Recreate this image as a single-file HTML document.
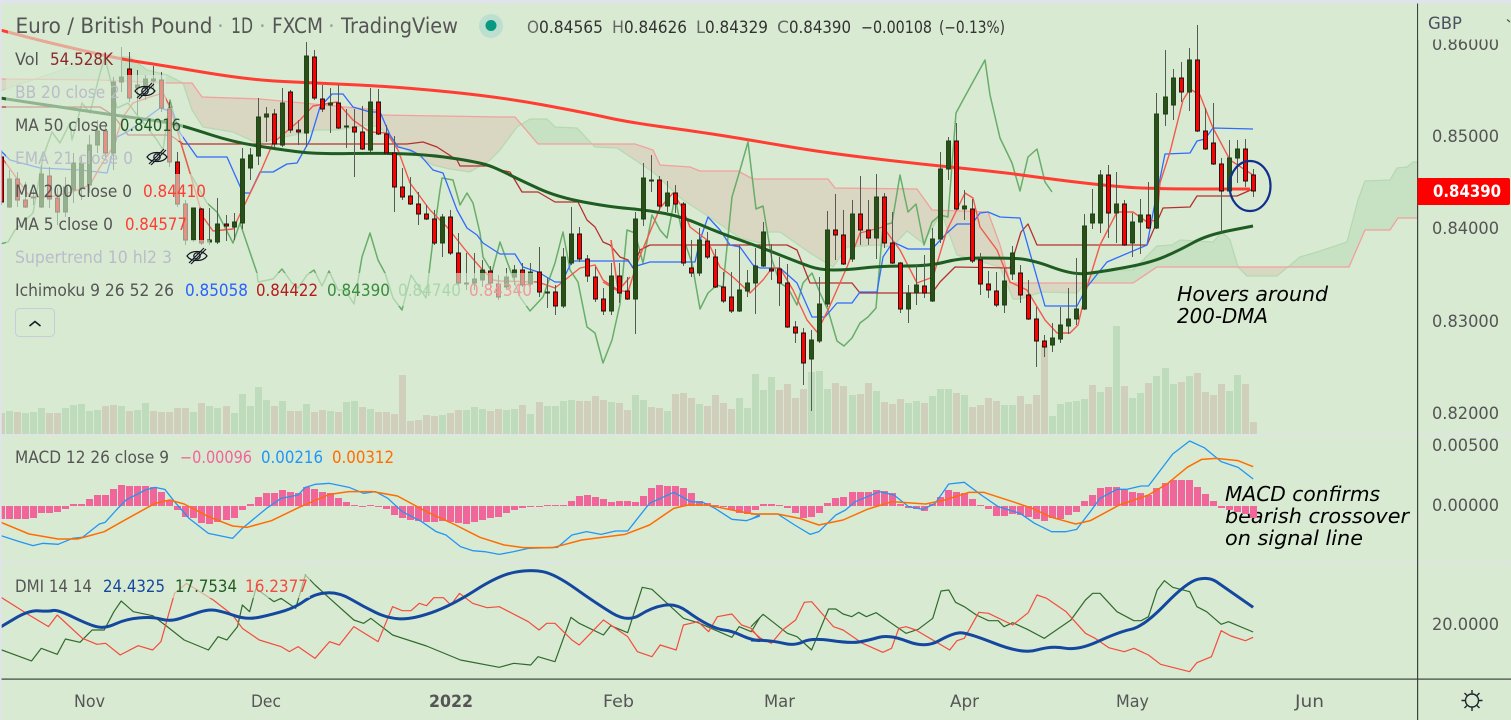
<!DOCTYPE html>
<html lang="en"><head><meta charset="utf-8"><title>EUR/GBP chart</title>
<style>
html,body{margin:0;padding:0;background:#d9ead3;width:1511px;height:720px;overflow:hidden}
svg{display:block}
text{font-family:"DejaVu Sans",sans-serif;font-size:16.5px;fill:#555}
.v{vector-effect:non-scaling-stroke;fill:none;stroke-linejoin:round}
.a{font-family:"DejaVu Sans",sans-serif;font-style:oblique;font-size:20px;fill:#000}
.t{font-size:21.5px}
</style></head><body>
<svg width="1511" height="720" viewBox="0 0 1511 720" xmlns="http://www.w3.org/2000/svg">
<defs>
<clipPath id="abv"><polygon points="0,79 100,80 167,83 192,83 202,97 260,99 377,110 380,115 500,117 515,117 538,144 635,144 653,150 660,165 690,167 700,171 738,171 753,179 828,179 835,188 917,189 932,210 988,212 1000,245 1010,283 1133,283 1157,267 1349,267 1365,230 1390,230 1398,218 1417,218 1417,0 0,0"/></clipPath>
<polygon id="cl" points="0,91 50,74 100,57 130,57 147,70 167,75 183,83 192,110 203,127 233,132 257,143 317,130 337,130 367,125 380,127 393,143 413,153 433,165 450,169 470,172 490,160 500,150 517,127 530,119 547,119 555,127 577,128 595,147 617,148 653,172 683,200 717,222 740,238 760,243 767,232 780,232 810,253 833,267 847,247 877,245 892,247 907,231 923,243 937,220 943,217 957,255 1000,267 1013,299 1020,299 1042,292 1077,293 1090,277 1100,270 1133,270 1157,246 1172,245 1180,240 1213,242 1222,232 1230,240 1238,267 1247,276 1277,276 1300,257 1317,252 1347,242 1358,200 1365,181 1390,180 1397,168 1407,167 1413,162 1417,162 1417,218 1398,218 1390,230 1365,230 1349,267 1157,267 1133,283 1010,283 1000,245 988,212 932,210 917,189 835,188 828,179 753,179 738,171 700,171 690,167 660,165 653,150 635,144 538,144 515,117 500,117 380,115 377,110 260,99 202,97 192,83 167,83 100,80 0,79"/>
</defs>
<rect width="1511" height="720" fill="#d9ead3"/>

<!-- cloud -->
<use href="#cl" fill="#d9d7c1"/>
<use href="#cl" fill="#c7e1c3" clip-path="url(#abv)"/>
<polyline fill="none" stroke="#b6d9b1" stroke-width="1.3" points="0,91 50,74 100,57 130,57 147,70 167,75 183,83 192,110 203,127 233,132 257,143 317,130 337,130 367,125 380,127 393,143 413,153 433,165 450,169 470,172 490,160 500,150 517,127 530,119 547,119 555,127 577,128 595,147 617,148 653,172 683,200 717,222 740,238 760,243 767,232 780,232 810,253 833,267 847,247 877,245 892,247 907,231 923,243 937,220 943,217 957,255 1000,267 1013,299 1020,299 1042,292 1077,293 1090,277 1100,270 1133,270 1157,246 1172,245 1180,240 1213,242 1222,232 1230,240 1238,267 1247,276 1277,276 1300,257 1317,252 1347,242 1358,200 1365,181 1390,180 1397,168 1407,167 1413,162 1417,162"/>
<polyline fill="none" stroke="#f2a09c" stroke-width="1.3" points="0,79 100,80 167,83 192,83 202,97 260,99 377,110 380,115 500,117 515,117 538,144 635,144 653,150 660,165 690,167 700,171 738,171 753,179 828,179 835,188 917,189 932,210 988,212 1000,245 1010,283 1133,283 1157,267 1349,267 1365,230 1390,230 1398,218 1417,218"/>

<!-- volume -->
<path fill="none" stroke="#cfcfbb" stroke-width="7" d="M1.5 413V434M17.5 412V434M49.5 413V434M57.5 413V434M105.5 406V434M113.5 405V434M129.5 411V434M153.5 411V434M161.5 412V434M169.5 412V434M177.5 408V434M185.5 408V434M201.5 403V434M226.5 406V434M274.5 406V434M290.5 411V434M298.5 411V434M314.5 412V434M322.5 410V434M338.5 412V434M362.5 407V434M378.5 412V434M386.5 412V434M394.5 414V434M402.5 375V434M410.5 421V434M418.5 420V434M426.5 415V434M434.5 416V434M450.5 413V434M458.5 410V434M490.5 411V434M498.5 409V434M522.5 405V434M539.5 402V434M579.5 401V434M587.5 401V434M595.5 396V434M603.5 400V434M619.5 403V434M627.5 410V434M651.5 407V434M659.5 408V434M675.5 394V434M683.5 393V434M691.5 398V434M707.5 406V434M715.5 395V434M723.5 403V434M731.5 409V434M779.5 390V434M787.5 384V434M795.5 398V434M803.5 389V434M835.5 383V434M843.5 386V434M860.5 394V434M868.5 383V434M884.5 402V434M892.5 404V434M900.5 399V434M924.5 403V434M956.5 393V434M972.5 407V434M980.5 405V434M988.5 398V434M996.5 401V434M1020.5 396V434M1028.5 404V434M1036.5 395V434M1044.5 345V434M1092.5 385V434M1108.5 387V434M1124.5 386V434M1148.5 383V434M1181.5 382V434M1197.5 373V434M1205.5 392V434M1213.5 395V434M1221.5 384V434M1245.5 384V434M1253.5 422V434"/>
<path fill="none" stroke="#bedcbb" stroke-width="7" d="M9.5 411V434M25.5 413V434M33.5 412V434M41.5 408V434M65.5 408V434M73.5 405V434M81.5 404V434M89.5 411V434M97.5 410V434M121.5 406V434M137.5 410V434M145.5 403V434M193.5 412V434M209.5 406V434M217.5 408V434M234.5 413V434M242.5 394V434M250.5 406V434M258.5 387V434M266.5 400V434M282.5 401V434M306.5 404V434M330.5 411V434M346.5 402V434M354.5 401V434M370.5 409V434M442.5 415V434M466.5 410V434M474.5 407V434M482.5 409V434M506.5 410V434M514.5 409V434M530.5 414V434M547.5 406V434M555.5 406V434M563.5 401V434M571.5 400V434M611.5 402V434M635.5 395V434M643.5 400V434M667.5 411V434M699.5 404V434M739.5 398V434M747.5 408V434M755.5 374V434M763.5 390V434M771.5 377V434M811.5 372V434M819.5 371V434M827.5 389V434M852.5 395V434M876.5 391V434M908.5 403V434M916.5 401V434M932.5 396V434M940.5 389V434M948.5 389V434M964.5 395V434M1004.5 405V434M1012.5 405V434M1052.5 416V434M1060.5 404V434M1068.5 402V434M1076.5 401V434M1084.5 399V434M1100.5 392V434M1116.5 326V434M1132.5 398V434M1140.5 393V434M1156.5 376V434M1165.5 368V434M1173.5 384V434M1189.5 376V434M1229.5 391V434M1237.5 375V434"/>

<!-- chikou -->
<polyline fill="none" stroke="#68ad69" stroke-width="1.5" stroke-linejoin="round" points="0,244 8,242 15,230 33,213 43,157 52,132 60,143 70,123 72,140 82,103 90,113 100,73 105,57 117,108 128,103 137,115 157,140 163,150 170,100 180,140 190,173 207,203 217,212 233,243 240,223 257,273 258,282 273,279 282,269 292,283 298,288 307,275 314,270 322,286 329,271 338,290 345,290 354,304 362,257 370,233 378,260 385,273 393,298 402,310 411,275 426,298 433,240 440,190 442,178 453,180 460,205 467,193 473,203 480,233 483,257 492,272 500,242 520,297 530,311 543,297 555,263 563,232 570,270 578,282 587,327 595,333 603,363 612,340 620,304 627,230 635,233 643,263 652,215 660,230 667,238 675,197 683,237 692,263 700,309 708,293 717,285 723,287 732,197 740,170 748,142 756,209 763,206 772,260 780,283 788,288 797,305 803,283 812,273 820,293 828,310 837,341 844,346 852,338 860,323 868,317 876,308 883,225 892,223 900,175 908,212 916,204 924,245 932,222 940,215 948,217 956,113 963,100 985,60 990,95 1000,138 1012,163 1020,191 1028,157 1037,149 1045,182 1052,192"/>
<!-- kijun -->
<polyline fill="none" stroke="#b5302e" stroke-width="1.3" stroke-linejoin="round" points="0,107 100,107 113,115 128,135 170,135 183,144 407,144 423,142 437,147 457,160 460,166 487,166 500,170 510,172 522,192 538,192 555,202 578,202 587,220 595,227 603,242 610,245 620,257 628,260 633,268 640,250 650,245 787,245 797,250 810,283 852,283 860,293 932,293 940,282 955,267 1010,268 1021,232 1028,224 1037,245 1147,245 1163,208 1190,207 1197,196 1237,196 1253,189"/>
<!-- tenkan -->
<polyline fill="none" stroke="#2f6bff" stroke-width="1.3" stroke-linejoin="round" points="0,150 10,160 40,168 80,170 107,173 117,137 127,132 137,125 160,108 173,112 180,133 197,157 227,157 243,193 250,193 260,172 273,172 287,164 297,163 310,140 320,107 332,94 343,94 353,107 370,112 380,112 390,135 398,147 410,150 420,155 433,170 443,173 457,210 467,228 477,235 483,243 500,254 515,254 523,267 538,272 555,282 562,282 572,261 628,261 633,267 650,262 680,262 695,262 700,240 708,217 720,230 730,245 740,247 753,265 760,268 780,268 797,283 812,317 825,317 837,303 852,303 860,292 877,292 883,257 893,242 908,249 932,249 947,233 957,224 972,224 980,213 988,212 1000,217 1020,218 1045,306 1077,306 1087,287 1107,262 1147,245 1153,213 1165,154 1190,153 1197,141 1205,139 1213,128 1253,129"/>
<!-- MA5 -->
<polyline fill="none" stroke="#f4584b" stroke-width="1.4" stroke-linejoin="round" points="0,155 13,173 30,197 50,197 72,192 90,185 100,167 113,147 123,117 133,103 150,97 163,93 170,107 180,140 190,173 200,207 203,217 213,231 223,230 233,229 242,210 260,173 273,143 300,120 313,106 337,102 353,120 370,132 387,133 398,150 410,183 430,210 447,227 467,252 480,267 493,280 500,281 538,282 555,288 565,280 580,268 595,265 603,280 618,290 628,292 637,263 660,208 673,193 682,207 690,227 707,240 720,267 733,277 750,293 763,280 772,268 780,268 793,290 807,320 817,332 828,310 847,267 860,233 883,227 900,250 917,283 933,277 947,230 965,193 973,198 980,227 997,250 1010,282 1027,290 1045,320 1057,333 1070,333 1078,325 1087,287 1100,245 1117,212 1133,212 1147,222 1157,220 1160,183 1170,152 1183,100 1190,89 1200,95 1213,128 1230,160 1253,175"/>
<path fill="none" stroke="#f4584b" stroke-width="1.6" d="M611 240L618 290M603 282L618 291L630 277"/>
<!-- MA 200 -->
<path fill="none" stroke="#ff3d33" stroke-width="3" stroke-linejoin="round" d="M0 30L25 36.5Q50,43 85,51Q120,59 140,62Q160,65 205,72.5Q250,80 283.5,81.5Q317,83 358.5,85Q400,87 450,92Q500,97 543.5,105Q587,113 607,117.5Q627,122 663.5,127Q700,132 725,136Q750,140 785,146Q820,152 865,157.5Q910,163 955,167.5Q1000,172 1021.5,175Q1043,178 1071.5,181.5Q1100,185 1125,187Q1150,189 1200,189L1250 189"/>
<!-- MA 50 -->
<path fill="none" stroke="#1e5c22" stroke-width="3" stroke-linejoin="round" d="M0 98L33 103Q67,108 90,111.5Q113,115 140,118.5Q167,122 178.5,125Q190,128 211.5,135Q233,142 258,146Q283,150 300,152Q317,154 350,153.5Q383,153 408,154Q433,155 458,159Q483,163 491.5,166.5Q500,170 510,175Q520,180 538.5,188.5Q557,197 583.5,202Q610,207 628.5,208.5Q647,210 665,213.5Q683,217 700,224.5Q717,232 738.5,239.5Q760,247 780,255Q800,263 810,266.5Q820,270 833.5,270Q847,270 863.5,268Q880,266 905,266Q930,266 945,262Q960,258 980,258Q1000,258 1015,258.5Q1030,259 1051.5,267Q1073,275 1086.5,273.5Q1100,272 1125,267.5Q1150,263 1165,256.5Q1180,250 1193.5,242.5Q1207,235 1230,230.5L1253 226"/>

<!-- candles -->
<path fill="none" stroke="#555a55" stroke-width="1" d="M1.5 150V205M9.5 170V208M17.5 172V207M25.5 182V208M33.5 190V205M41.5 165V208M49.5 167V208M57.5 188V225M65.5 177V217M73.5 153V203M81.5 157V200M89.5 135V193M97.5 120V153M105.5 126V157M113.5 77V170M121.5 47V92M129.5 52V102M137.5 70V115M145.5 75V100M153.5 66V93M161.5 72V112M169.5 102V167M177.5 152V207M185.5 200V245M193.5 208V242M201.5 208V245M209.5 208V245M217.5 198V244M226.5 215V241M234.5 213V240M242.5 148V229M250.5 148V180M258.5 98V165M266.5 107V142M274.5 109V147M282.5 88V147M290.5 90V133M298.5 120V145M306.5 42V147M314.5 50V100M322.5 85V112M330.5 88V133M338.5 85V129M346.5 109V148M354.5 109V177M362.5 106V150M370.5 88V152M378.5 89V135M386.5 125V155M394.5 136V212M402.5 168V200M410.5 177V205M418.5 192V225M426.5 205V220M434.5 210V245M442.5 214V257M450.5 210V255M458.5 233V285M466.5 253V290M474.5 253V290M482.5 260V287M490.5 266V290M498.5 275V300M506.5 268V289M514.5 265V285M522.5 263V287M530.5 263V286M539.5 247V297M547.5 278V308M555.5 285V315M563.5 248V308M571.5 207V265M579.5 227V262M587.5 255V282M595.5 267V302M603.5 288V315M611.5 263V315M619.5 263V303M627.5 277V300M635.5 212V334M643.5 163V226M651.5 155V192M659.5 176V213M667.5 181V212M675.5 185V213M683.5 202V266M691.5 240V277M699.5 228V276M707.5 232V259M715.5 249V288M723.5 272V303M731.5 272V313M739.5 245V312M747.5 270V297M755.5 248V314M763.5 222V267M771.5 244V280M779.5 257V306M787.5 264V328M795.5 321V343M803.5 328V385M811.5 330V411M819.5 277V343M827.5 211V307M835.5 194V260M843.5 210V265M852.5 200V262M860.5 176V245M868.5 200V245M876.5 174V259M884.5 193V248M892.5 212V264M900.5 262V313M908.5 285V323M916.5 265V305M924.5 255V298M932.5 228V302M940.5 152V243M948.5 137V180M956.5 123V210M964.5 190V220M972.5 199V263M980.5 253V295M988.5 271V298M996.5 272V307M1004.5 268V313M1012.5 246V280M1020.5 265V303M1028.5 280V320M1036.5 307V367M1044.5 335V357M1052.5 323V352M1060.5 307V343M1068.5 288V334M1076.5 258V325M1084.5 214V310M1092.5 189V229M1100.5 170V233M1108.5 165V238M1116.5 172V243M1124.5 200V246M1132.5 213V257M1140.5 199V254M1148.5 182V229M1156.5 93V229M1165.5 50V126M1173.5 69V120M1181.5 62V102M1189.5 48V111M1197.5 25V132M1205.5 108V150M1213.5 103V165M1221.5 158V233M1229.5 140V192M1237.5 140V183M1245.5 139V187M1253.5 169V197"/>
<path fill="#ff0000" stroke="#111" stroke-width=".9" d="M-.5 157h4V202h-4zM15.5 179h4V200h-4zM23.5 200h4V207h-4zM47.5 176h4V199h-4zM55.5 198h4V212h-4zM103.5 131h4V153h-4zM127.5 69h4V98h-4zM159.5 80h4V108h-4zM167.5 109h4V162h-4zM175.5 162h4V204h-4zM183.5 204h4V240h-4zM199.5 209h4V243h-4zM224.5 224h4V226h-4zM272.5 114h4V144h-4zM288.5 92h4V130h-4zM296.5 130h4V132h-4zM312.5 57h4V98h-4zM320.5 99h4V109h-4zM336.5 103h4V128h-4zM352.5 127h4V132h-4zM360.5 132h4V149h-4zM376.5 102h4V134h-4zM384.5 134h4V153h-4zM392.5 153h4V187h-4zM400.5 187h4V197h-4zM408.5 196h4V204h-4zM416.5 204h4V214h-4zM424.5 214h4V219h-4zM432.5 219h4V243h-4zM448.5 217h4V253h-4zM456.5 253h4V283h-4zM488.5 271h4V283h-4zM496.5 284h4V297h-4zM520.5 270h4V285h-4zM537.5 272h4V292h-4zM553.5 292h4V306h-4zM577.5 234h4V259h-4zM585.5 259h4V276h-4zM593.5 277h4V299h-4zM601.5 299h4V311h-4zM617.5 276h4V293h-4zM625.5 291h4V299h-4zM657.5 180h4V206h-4zM673.5 193h4V204h-4zM681.5 204h4V263h-4zM689.5 268h4V273h-4zM705.5 241h4V257h-4zM713.5 257h4V287h-4zM721.5 287h4V301h-4zM729.5 297h4V311h-4zM769.5 269h4V271h-4zM777.5 269h4V283h-4zM785.5 283h4V327h-4zM793.5 327h4V333h-4zM801.5 333h4V363h-4zM833.5 230h4V235h-4zM841.5 235h4V264h-4zM858.5 214h4V230h-4zM866.5 230h4V238h-4zM882.5 197h4V243h-4zM890.5 243h4V263h-4zM898.5 263h4V309h-4zM922.5 286h4V293h-4zM954.5 141h4V209h-4zM970.5 209h4V261h-4zM978.5 260h4V284h-4zM986.5 284h4V290h-4zM994.5 291h4V305h-4zM1018.5 273h4V295h-4zM1026.5 295h4V319h-4zM1034.5 319h4V341h-4zM1042.5 341h4V347h-4zM1106.5 175h4V213h-4zM1122.5 204h4V245h-4zM1146.5 215h4V228h-4zM1179.5 78h4V92h-4zM1195.5 60h4V131h-4zM1203.5 131h4V149h-4zM1211.5 143h4V164h-4zM1219.5 164h4V191h-4zM1243.5 149h4V181h-4zM1251.5 175h4V191h-4z"/>
<path fill="#28511a" stroke="#1c3d11" stroke-width=".9" d="M7.5 179h4V207h-4zM31.5 197h4V198h-4zM39.5 174h4V207h-4zM63.5 187h4V212h-4zM71.5 163h4V190h-4zM79.5 163h4V188h-4zM87.5 145h4V185h-4zM95.5 131h4V145h-4zM111.5 82h4V153h-4zM119.5 77h4V82h-4zM135.5 85h4V88h-4zM143.5 79h4V87h-4zM151.5 79h4V81h-4zM191.5 208h4V240h-4zM207.5 240h4V242h-4zM215.5 224h4V242h-4zM232.5 222h4V227h-4zM240.5 159h4V223h-4zM248.5 155h4V168h-4zM256.5 117h4V156h-4zM264.5 114h4V117h-4zM280.5 103h4V145h-4zM304.5 56h4V133h-4zM328.5 103h4V105h-4zM344.5 126h4V127h-4zM368.5 102h4V150h-4zM440.5 217h4V243h-4zM464.5 283h4V284h-4zM472.5 279h4V283h-4zM480.5 270h4V280h-4zM504.5 277h4V287h-4zM512.5 270h4V277h-4zM528.5 272h4V284h-4zM545.5 292h4V293h-4zM561.5 257h4V306h-4zM569.5 234h4V263h-4zM609.5 276h4V311h-4zM633.5 219h4V299h-4zM641.5 178h4V219h-4zM649.5 180h4V181h-4zM665.5 193h4V206h-4zM697.5 240h4V273h-4zM737.5 290h4V311h-4zM745.5 283h4V291h-4zM753.5 266h4V283h-4zM761.5 232h4V266h-4zM809.5 340h4V359h-4zM817.5 304h4V341h-4zM825.5 230h4V304h-4zM850.5 214h4V259h-4zM874.5 197h4V238h-4zM906.5 293h4V309h-4zM914.5 285h4V293h-4zM930.5 239h4V301h-4zM938.5 169h4V239h-4zM946.5 141h4V169h-4zM962.5 206h4V209h-4zM1002.5 281h4V305h-4zM1010.5 253h4V274h-4zM1050.5 338h4V345h-4zM1058.5 325h4V339h-4zM1066.5 319h4V326h-4zM1074.5 309h4V319h-4zM1082.5 226h4V309h-4zM1090.5 214h4V223h-4zM1098.5 175h4V223h-4zM1114.5 204h4V213h-4zM1130.5 222h4V243h-4zM1138.5 215h4V222h-4zM1154.5 114h4V228h-4zM1163.5 97h4V114h-4zM1171.5 78h4V105h-4zM1187.5 60h4V92h-4zM1227.5 158h4V191h-4zM1235.5 149h4V158h-4z"/>

<ellipse cx="1250" cy="186" rx="20.5" ry="25" fill="none" stroke="#112f8c" stroke-width="2.2"/>

<!-- legend backgrounds -->
<g fill="#d9ead3" fill-opacity=".62">
<rect x="8" y="4" width="462" height="38"/>
<rect x="6" y="42" width="116" height="33"/><rect x="6" y="75" width="160" height="33"/><rect x="6" y="108" width="177" height="33"/><rect x="6" y="141" width="166" height="33"/><rect x="6" y="174" width="202" height="33"/><rect x="6" y="207" width="183" height="33"/><rect x="6" y="240" width="204" height="33"/><rect x="6" y="273" width="528" height="33"/>
</g>

<!-- title -->
<g>
<text class="t" x="15.5" y="33" textLength="197" lengthAdjust="spacingAndGlyphs">Euro / British Pound</text>
<text class="t" x="217" y="33" style="fill:#9aa09a">·</text>
<text class="t" x="231" y="33" textLength="22" lengthAdjust="spacingAndGlyphs">1D</text>
<text class="t" x="259" y="33" style="fill:#9aa09a">·</text>
<text class="t" x="272" y="33" textLength="51" lengthAdjust="spacingAndGlyphs">FXCM</text>
<text class="t" x="328" y="33" style="fill:#9aa09a">·</text>
<text class="t" x="341" y="33" textLength="117" lengthAdjust="spacingAndGlyphs">TradingView</text>
<circle cx="491" cy="26" r="12" fill="#bcdfd0"/><circle cx="491" cy="25.5" r="5.5" fill="#089981"/>
<text x="527" y="33" textLength="12" lengthAdjust="spacingAndGlyphs" style="fill:#666">O</text><text x="539" y="33" textLength="64" lengthAdjust="spacingAndGlyphs" style="fill:#333">0.84565</text>
<text x="612" y="33" textLength="12" lengthAdjust="spacingAndGlyphs" style="fill:#666">H</text><text x="624" y="33" textLength="63" lengthAdjust="spacingAndGlyphs" style="fill:#333">0.84626</text>
<text x="696" y="33" textLength="9" lengthAdjust="spacingAndGlyphs" style="fill:#666">L</text><text x="705" y="33" textLength="63" lengthAdjust="spacingAndGlyphs" style="fill:#333">0.84329</text>
<text x="777" y="33" textLength="12" lengthAdjust="spacingAndGlyphs" style="fill:#666">C</text><text x="789" y="33" textLength="62" lengthAdjust="spacingAndGlyphs" style="fill:#333">0.84390</text>
<text x="861" y="33" textLength="71" lengthAdjust="spacingAndGlyphs" style="fill:#333">−0.00108</text><text x="939" y="33" textLength="66" lengthAdjust="spacingAndGlyphs" style="fill:#333">(−0.13%)</text>
</g>

<!-- legend text -->
<text x="15" y="65" textLength="24" lengthAdjust="spacingAndGlyphs">Vol</text><text x="50" y="65" textLength="63" lengthAdjust="spacingAndGlyphs" style="fill:#8b2a2a">54.528K</text>
<text x="15" y="98" textLength="105" lengthAdjust="spacingAndGlyphs" style="fill:#b9bcc9">BB 20 close 2</text>
<text x="15" y="131" textLength="93" lengthAdjust="spacingAndGlyphs">MA 50 close</text><text x="120" y="131" textLength="61" lengthAdjust="spacingAndGlyphs" style="fill:#1e5c22">0.84016</text>
<text x="15" y="164" textLength="118" lengthAdjust="spacingAndGlyphs" style="fill:#b9bcc9">EMA 21 close 0</text>
<text x="15" y="197" textLength="117" lengthAdjust="spacingAndGlyphs">MA 200 close 0</text><text x="143" y="197" textLength="63" lengthAdjust="spacingAndGlyphs" style="fill:#ff3d33">0.84410</text>
<text x="15" y="230" textLength="98" lengthAdjust="spacingAndGlyphs">MA 5 close 0</text><text x="125" y="230" textLength="62" lengthAdjust="spacingAndGlyphs" style="fill:#ff3d33">0.84577</text>
<text x="15" y="263" textLength="157" lengthAdjust="spacingAndGlyphs" style="fill:#b9bcc9">Supertrend 10 hl2 3</text>
<text x="15" y="296" textLength="159" lengthAdjust="spacingAndGlyphs">Ichimoku 9 26 52 26</text>
<text x="185" y="296" textLength="63" lengthAdjust="spacingAndGlyphs" style="fill:#2962ff">0.85058</text>
<text x="256" y="296" textLength="62" lengthAdjust="spacingAndGlyphs" style="fill:#b71c1c">0.84422</text>
<text x="327" y="296" textLength="63" lengthAdjust="spacingAndGlyphs" style="fill:#388e3c">0.84390</text>
<text x="398" y="296" textLength="63" lengthAdjust="spacingAndGlyphs" style="fill:#a8d8aa">0.84740</text>
<text x="469" y="296" textLength="63" lengthAdjust="spacingAndGlyphs" style="fill:#f09a9a">0.84340</text>

<!-- eyes -->
<g fill="none" stroke="#131722" stroke-width="1.2">
<g transform="translate(145,91)"><path d="M-10 0C-6-6 6-6 10 0C6 6-6 6-10 0Z"/><circle r="3.2"/><path d="M-8 7L7-8M-6 8L9-7"/></g>
<g transform="translate(157,157)"><path d="M-10 0C-6-6 6-6 10 0C6 6-6 6-10 0Z"/><circle r="3.2"/><path d="M-8 7L7-8M-6 8L9-7"/></g>
<g transform="translate(197,256)"><path d="M-10 0C-6-6 6-6 10 0C6 6-6 6-10 0Z"/><circle r="3.2"/><path d="M-8 7L7-8M-6 8L9-7"/></g>
</g>
<rect x="15.5" y="308.5" width="39" height="28" rx="4" fill="none" stroke="#c8ccd8"/>
<path d="M29.5 326L35 321.5L40.5 326" fill="none" stroke="#131722" stroke-width="1.5"/>

<!-- annotations -->
<text class="a" x="1177" y="301" style="font-size:20px;fill:#000" textLength="151" lengthAdjust="spacingAndGlyphs">Hovers around</text>
<text class="a" x="1177" y="323" style="font-size:20px;fill:#000" textLength="91" lengthAdjust="spacingAndGlyphs">200-DMA</text>
<text class="a" x="1225" y="501" style="font-size:20px;fill:#000" textLength="155" lengthAdjust="spacingAndGlyphs">MACD confirms</text>
<text class="a" x="1225" y="523" style="font-size:20px;fill:#000" textLength="184" lengthAdjust="spacingAndGlyphs">bearish crossover</text>
<text class="a" x="1225" y="545" style="font-size:20px;fill:#000" textLength="138" lengthAdjust="spacingAndGlyphs">on signal line</text>

<!-- MACD histogram -->
<path fill="none" stroke="#f0659a" stroke-width="7" d="M1.5 506V519M9.5 506V519M17.5 506V519M25.5 506V519M33.5 506V518M41.5 506V513M49.5 506V513M57.5 506V512M65.5 506V509M73.5 506V504M81.5 506V504M89.5 506V499M97.5 506V495M105.5 506V495M113.5 506V489M121.5 506V485M129.5 506V486M137.5 506V486M145.5 506V486M153.5 506V487M161.5 506V492M169.5 506V500M177.5 506V510M185.5 506V517M193.5 506V518M201.5 506V523M209.5 506V524M217.5 506V522M226.5 506V520M234.5 506V518M242.5 506V510M250.5 506V504M258.5 506V497M266.5 506V493M274.5 506V493M282.5 506V490M290.5 506V492M298.5 506V493M306.5 506V487M314.5 506V489M322.5 506V492M330.5 506V493M338.5 506V498M346.5 506V502M354.5 506V505M362.5 506V507M370.5 506V505M378.5 506V507M386.5 506V509M394.5 506V515M402.5 506V518M410.5 506V520M418.5 506V521M426.5 506V522M434.5 506V522M442.5 506V521M450.5 506V522M458.5 506V523M466.5 506V524M474.5 506V522M482.5 506V520M490.5 506V518M498.5 506V517M506.5 506V513M514.5 506V510M522.5 506V508M530.5 506V507M539.5 506V507M547.5 506V505M555.5 506V505M563.5 506V505M571.5 506V501M579.5 506V496M587.5 506V495M595.5 506V497M603.5 506V499M611.5 506V502M619.5 506V501M627.5 506V501M635.5 506V502M643.5 506V496M651.5 506V488M659.5 506V485M667.5 506V486M675.5 506V486M683.5 506V488M691.5 506V493M699.5 506V501M707.5 506V503M715.5 506V505M723.5 506V507M731.5 506V510M739.5 506V513M747.5 506V514M755.5 506V510M763.5 506V504M771.5 506V504M779.5 506V505M787.5 506V508M795.5 506V513M803.5 506V518M811.5 506V517M819.5 506V513M827.5 506V503M835.5 506V498M843.5 506V497M852.5 506V492M860.5 506V492M868.5 506V492M876.5 506V490M884.5 506V491M892.5 506V493M900.5 506V504M908.5 506V508M916.5 506V509M924.5 506V511M932.5 506V504M940.5 506V497M948.5 506V490M956.5 506V492M964.5 506V493M972.5 506V499M980.5 506V505M988.5 506V509M996.5 506V516M1004.5 506V516M1012.5 506V514M1020.5 506V515M1028.5 506V517M1036.5 506V519M1044.5 506V521M1052.5 506V518M1060.5 506V519M1068.5 506V515M1076.5 506V512M1084.5 506V501M1092.5 506V495M1100.5 506V488M1108.5 506V487M1116.5 506V487M1124.5 506V490M1132.5 506V492M1140.5 506V493M1148.5 506V495M1156.5 506V488M1165.5 506V483M1173.5 506V480M1181.5 506V480M1189.5 506V480M1197.5 506V487M1205.5 506V494M1213.5 506V501M1221.5 506V508M1229.5 506V510M1237.5 506V512M1245.5 506V514M1253.5 506V518"/>

<!-- MACD / DMI lines, left half -->
<g transform="translate(0,430) scale(.4847,.33333)">
<polyline class="v" stroke="#2196f3" stroke-width="1.3" points="0,316 40,335 68,347 88,340 120,343 150,325 170,322 205,282 217,277 240,240 260,210 300,180 320,172 340,178 360,215 390,265 430,310 480,325 500,295 550,235 580,205 615,195 630,172 650,163 680,160 720,172 750,190 775,185 800,205 830,245 870,275 900,305 920,315 950,350 975,362 1000,365 1030,373 1060,365 1090,355 1150,352 1180,315 1210,305 1240,313 1270,303 1295,303 1340,220 1390,187 1425,215 1450,217 1475,235 1510,268 1540,272 1568,258"/>
<polyline class="v" stroke="#ff6d00" stroke-width="1.5" points="0,276 60,312 120,327 160,327 215,305 270,260 320,220 350,210 380,222 430,260 480,288 510,292 560,272 620,230 680,193 720,185 770,185 820,198 880,245 940,285 990,322 1040,345 1080,353 1140,353 1200,330 1290,313 1340,285 1390,235 1420,225 1460,225 1520,243 1568,255"/>
<polyline class="v" stroke="#2f6b2c" stroke-width="1.2" points="0,658 65,693 85,655 118,673 135,627 165,637 190,600 215,600 235,545 250,513 275,545 315,557 345,590 380,630 430,660 450,620 468,630 490,590 500,525 515,545 528,475 565,515 580,505 610,535 630,435 650,465 680,505 730,570 750,580 765,565 810,615 880,648 950,690 1030,712 1060,700 1095,705 1110,680 1145,695 1178,562 1195,580 1245,615 1260,587 1295,608 1325,472 1345,478 1410,565 1440,578 1510,622 1525,590 1550,605 1568,562"/>
<polyline class="v" stroke="#f44c3c" stroke-width="1.2" points="0,500 60,555 100,590 118,555 170,625 200,643 218,640 248,675 285,647 315,660 332,635 360,490 385,460 440,510 480,555 500,595 535,630 580,650 597,665 615,650 650,685 680,635 700,645 730,590 780,635 810,530 830,542 848,542 865,520 880,527 895,503 915,503 930,525 948,490 975,520 1005,533 1030,530 1090,575 1112,600 1128,580 1145,580 1180,630 1195,645 1245,570 1295,620 1315,665 1345,680 1362,645 1395,660 1410,585 1440,575 1462,605 1480,560 1510,552 1530,585 1550,595 1568,628"/>
<path class="v" stroke="#14479e" stroke-width="3" d="M0 592L30 566Q60,540 80,542.5Q100,545 109,541.5Q118,538 149,560Q180,582 197.5,589.5Q215,597 237.5,582Q260,567 287.5,563.5Q315,560 332.5,567.5Q350,575 370,566Q390,557 410,547Q430,537 445,541Q460,545 485,557.5Q510,570 537.5,561Q565,552 587.5,542Q610,532 630,511Q650,490 675,488.5Q700,487 725,508.5Q750,530 775,547.5Q800,565 825,566.5Q850,568 890,548Q930,528 980,481.5Q1030,435 1062.5,426.5Q1095,418 1120,425Q1145,432 1187.5,476Q1230,520 1262.5,549Q1295,578 1320,555Q1345,532 1370,526Q1395,520 1417.5,544Q1440,568 1460,583Q1480,598 1495,600.5Q1510,603 1530,616.5Q1550,630 1568,632"/>
</g>
<!-- right half -->
<g transform="translate(751,430) scale(.4847,.33333)">
<polyline class="v" stroke="#2196f3" stroke-width="1.3" points="0,268 20,252 55,252 90,285 122,313 140,305 175,255 195,240 215,215 240,200 265,185 295,195 325,230 355,238 380,220 408,162 440,157 475,195 510,230 555,250 585,280 620,305 650,305 672,298 700,245 720,205 755,178 775,178 805,168 820,168 870,72 905,33 935,53 970,95 1005,112 1036,147"/>
<polyline class="v" stroke="#ff6d00" stroke-width="1.5" points="0,252 55,252 100,265 140,285 190,270 240,238 290,215 360,222 400,210 450,187 480,187 540,215 580,235 620,262 670,282 700,272 760,225 820,195 860,160 900,112 930,88 960,85 1005,92 1036,110"/>
<polyline class="v" stroke="#2f6b2c" stroke-width="1.2" points="0,590 25,553 75,610 95,620 125,660 160,537 175,537 190,552 208,560 222,547 238,560 258,548 320,610 345,598 375,565 392,483 408,480 422,517 440,530 465,555 490,572 510,572 522,590 540,578 570,598 605,625 660,570 690,510 705,490 720,490 755,545 790,572 805,572 820,560 838,480 853,452 870,472 905,485 920,530 940,545 970,583 985,575 1036,606"/>
<polyline class="v" stroke="#f44c3c" stroke-width="1.2" points="0,600 20,625 42,640 65,600 92,570 110,517 125,515 170,590 190,600 230,640 272,667 290,655 305,595 320,590 340,600 410,660 425,632 440,625 470,547 490,550 540,585 572,548 590,495 610,505 650,545 690,610 710,625 738,653 770,665 790,655 820,675 845,703 905,725 920,698 950,680 970,602 990,618 1020,632 1036,622"/>
<path class="v" stroke="#14479e" stroke-width="3" d="M0 630L22 631Q45,632 67.5,640Q90,648 107.5,635.5Q125,623 165,631.5Q205,640 222.5,636Q240,632 262.5,622.5Q285,613 322.5,634Q360,655 387.5,632.5Q415,610 430,608.5Q445,607 502.5,640Q560,673 590,660Q620,647 647.5,654.5Q675,662 717.5,633.5Q760,605 785,597.5Q810,590 855,522.5Q900,455 922.5,447.5Q945,440 960,455Q975,470 1036,532"/>
</g>

<!-- pane legends -->
<rect x="6" y="575" width="304" height="23" fill="#d9ead3" fill-opacity=".62"/>
<text x="15" y="463" textLength="154" lengthAdjust="spacingAndGlyphs">MACD 12 26 close 9</text>
<text x="180" y="463" textLength="72" lengthAdjust="spacingAndGlyphs" style="fill:#f0659a">−0.00096</text>
<text x="261" y="463" textLength="62" lengthAdjust="spacingAndGlyphs" style="fill:#2196f3">0.00216</text>
<text x="332" y="463" textLength="62" lengthAdjust="spacingAndGlyphs" style="fill:#ff6d00">0.00312</text>
<text x="15" y="592" textLength="77" lengthAdjust="spacingAndGlyphs">DMI 14 14</text>
<text x="103" y="592" textLength="62" lengthAdjust="spacingAndGlyphs" style="fill:#14479e">24.4325</text>
<text x="175" y="592" textLength="62" lengthAdjust="spacingAndGlyphs" style="fill:#1e5c22">17.7534</text>
<text x="245" y="592" textLength="63" lengthAdjust="spacingAndGlyphs" style="fill:#f44c3c">16.2377</text>

<!-- separators -->
<rect x="0" y="0" width="1511" height="3.5" fill="#e0e3eb"/>
<rect x="0" y="0" width="1.7" height="720" fill="#e0e3eb"/>
<rect x="0" y="434" width="1511" height="1.5" fill="#e0e3eb"/>
<rect x="0" y="562.5" width="1511" height="1.5" fill="#e0e3eb"/>
<rect x="1.5" y="678.5" width="1510" height="1.2" fill="#3c423c"/>
<rect x="1417" y="3.5" width="1.2" height="716.5" fill="#3c423c"/>

<!-- price axis -->
<text x="1432" y="50" textLength="67" lengthAdjust="spacingAndGlyphs">0.86000</text>
<rect x="1418.2" y="3.5" width="92.8" height="36" fill="#d9ead3"/>
<text x="1428" y="29" textLength="34" lengthAdjust="spacingAndGlyphs" style="fill:#4a5060">GBP</text>
<path d="M1507 19.5L1510 22" fill="none" stroke="#555" stroke-width="1.2"/>
<text x="1432" y="142" textLength="67" lengthAdjust="spacingAndGlyphs">0.85000</text>
<text x="1432" y="234" textLength="67" lengthAdjust="spacingAndGlyphs">0.84000</text>
<text x="1432" y="327" textLength="67" lengthAdjust="spacingAndGlyphs">0.83000</text>
<text x="1432" y="419" textLength="67" lengthAdjust="spacingAndGlyphs">0.82000</text>
<path d="M1417.5 178H1508a2 2 0 0 1 2 2V203a2 2 0 0 1-2 2H1417.5Z" fill="#ff0000"/>
<text x="1433" y="197" textLength="68" lengthAdjust="spacingAndGlyphs" style="fill:#fff;font-weight:700">0.84390</text>
<text x="1432" y="451" textLength="67" lengthAdjust="spacingAndGlyphs">0.00500</text>
<text x="1432" y="511" textLength="67" lengthAdjust="spacingAndGlyphs">0.00000</text>
<text x="1432" y="630" textLength="67" lengthAdjust="spacingAndGlyphs">20.0000</text>

<!-- time axis -->
<text x="74" y="707" textLength="31" lengthAdjust="spacingAndGlyphs">Nov</text>
<text x="251" y="707" textLength="30" lengthAdjust="spacingAndGlyphs">Dec</text>
<text x="429" y="707" textLength="44" lengthAdjust="spacingAndGlyphs" style="font-weight:700">2022</text>
<text x="603" y="707" textLength="31" lengthAdjust="spacingAndGlyphs">Feb</text>
<text x="764" y="707" textLength="31" lengthAdjust="spacingAndGlyphs">Mar</text>
<text x="950" y="707" textLength="29" lengthAdjust="spacingAndGlyphs">Apr</text>
<text x="1116" y="707" textLength="33" lengthAdjust="spacingAndGlyphs">May</text>
<text x="1295" y="707" textLength="29" lengthAdjust="spacingAndGlyphs">Jun</text>
<g fill="none" stroke="#20262e" stroke-width="1.4" transform="translate(1472,700.5)"><circle r="6.5"/><path d="M0-7V-10.5M0 7V10.5M-7 0H-10.5M7 0H10.5M-5-5L-7.5-7.5M5-5L7.5-7.5M-5 5L-7.5 7.5M5 5L7.5 7.5"/></g>
</svg>
</body></html>
